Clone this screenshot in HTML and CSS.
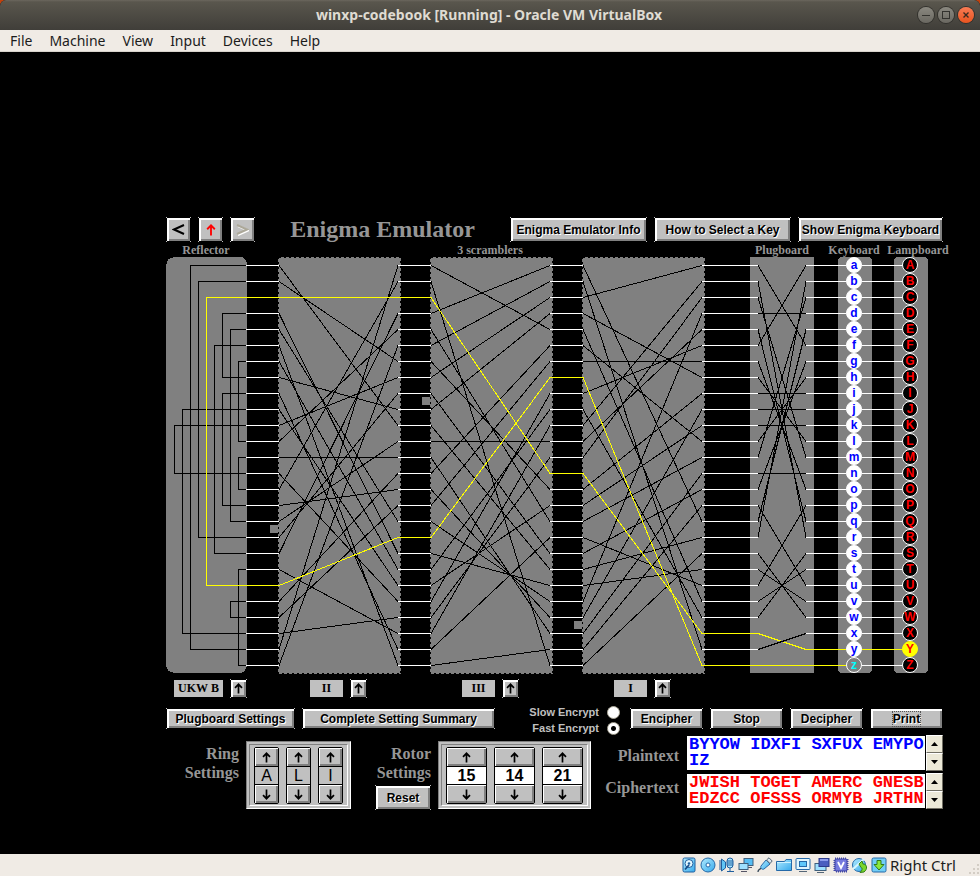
FILE: index.html
```html
<!DOCTYPE html>
<html lang="en">
<head>
<meta charset="utf-8">
<title>winxp-codebook [Running] - Oracle VM VirtualBox</title>
<link rel="stylesheet" href="styles.css">
</head>
<body>
<svg class="defs" width="0" height="0" aria-hidden="true">
  <defs>
    <symbol id="up" viewBox="0 0 9 11"><path d="M4.5 1.2V10.5M1 4.8L4.5 1.3L8 4.8" fill="none" stroke="currentColor" stroke-width="1.7"/></symbol>
    <symbol id="down" viewBox="0 0 9 11"><path d="M4.5 .5V9.8M1 6.2L4.5 9.7L8 6.2" fill="none" stroke="currentColor" stroke-width="1.7"/></symbol>
    <linearGradient id="blue" x1="0" y1="0" x2="1" y2="1"><stop offset="0" stop-color="#b4ecff"/><stop offset="1" stop-color="#35a9ec"/></linearGradient>
  </defs>
</svg>

<header class="titlebar">
  <h1 class="window-title">winxp-codebook [Running] - Oracle VM VirtualBox</h1>
  <div class="window-buttons">
    <button class="wbtn" aria-label="Minimize"><svg width="16" height="16"><path d="M4 8.5h8" stroke="#33322e" stroke-width="1"/></svg></button>
    <button class="wbtn" aria-label="Maximize"><svg width="16" height="16"><rect x="4.5" y="4.5" width="7" height="7" fill="none" stroke="#33322e"/></svg></button>
    <button class="wbtn close" aria-label="Close"><svg width="16" height="16"><path d="M5.500 5.500l5 5m0-5l-5 5" stroke="#3b2a20" stroke-width="1.400"/></svg></button>
  </div>
</header>
<nav class="menubar">
  <a href="#">File</a><a href="#">Machine</a><a href="#">View</a><a href="#">Input</a><a href="#">Devices</a><a href="#">Help</a>
</nav>

<main class="guest">
  <div class="emulator">
    <div class="toolbar">
      <button class="btn square" aria-label="Back"><svg width="13" height="11"><path d="M12 1L2 5.500L12 10" fill="none" stroke="#000" stroke-width="2"/></svg></button>
      <button class="btn square red" aria-label="Up"><svg width="10" height="12"><use href="#up"/></svg></button>
      <button class="btn square" aria-label="Forward" disabled><svg width="13" height="12"><path d="M2 2L12 6.500L2 11" fill="none" stroke="#fff" stroke-width="2"/><path d="M1 1L11 5.500L1 10" fill="none" stroke="#aca899" stroke-width="2"/></svg></button>
      <h2 class="title">Enigma Emulator</h2>
      <button class="btn info">Enigma Emulator Info</button>
      <button class="btn info">How to Select a Key</button>
      <button class="btn show">Show Enigma Keyboard</button>
    </div>

    <div class="captions">
      <span>Reflector</span><span>3 scramblers</span><span>Plugboard</span><span>Keyboard</span><span>Lampboard</span>
    </div>

    <div class="machine">
      <svg class="wiring" id="wiring" width="762" height="417" viewBox="166 257 762 417" role="img" aria-label="Wiring diagram"></svg>
      <div class="keys" id="keys"></div>
      <div class="lamps" id="lamps"></div>
    </div>

    <div class="rotors">
      <div class="rotor"><span class="tag wide">UKW B</span><button class="btn mini" aria-label="Next reflector"><svg width="9" height="11"><use href="#up"/></svg></button></div>
      <div class="rotor"><span class="tag">II</span><button class="btn mini" aria-label="Next left rotor"><svg width="9" height="11"><use href="#up"/></svg></button></div>
      <div class="rotor"><span class="tag">III</span><button class="btn mini" aria-label="Next middle rotor"><svg width="9" height="11"><use href="#up"/></svg></button></div>
      <div class="rotor"><span class="tag">I</span><button class="btn mini" aria-label="Next right rotor"><svg width="9" height="11"><use href="#up"/></svg></button></div>
    </div>

    <div class="actions">
      <button class="btn plug">Plugboard Settings</button>
      <button class="btn summary">Complete Setting Summary</button>
      <div class="speed">
        <label>Slow Encrypt<input type="radio" name="speed"></label>
        <label>Fast Encrypt<input type="radio" name="speed" checked></label>
      </div>
      <button class="btn act">Encipher</button>
      <button class="btn act">Stop</button>
      <button class="btn act">Decipher</button>
      <button class="btn act focused"><span>Print</span></button>
    </div>

    <div class="settings">
      <div class="caption ring">Ring<br>Settings</div>
      <div class="frame"><div class="inner ring-cols" id="ring"></div></div>
      <div class="caption rotorset">Rotor<br>Settings<button class="btn reset">Reset</button></div>
      <div class="frame"><div class="inner rotor-cols" id="rotor"></div></div>
      <div class="texts">
        <div class="labels">
          <label for="plain">Plaintext</label>
          <label for="cipher">Ciphertext</label>
        </div>
        <div class="boxes">
          <div class="textrow">
            <textarea id="plain" class="plain" rows="2" spellcheck="false">BYYOW IDXFI SXFUX EMYPO
IZ</textarea>
            <div class="scroll"><button aria-label="Scroll plaintext up"><svg width="7" height="4"><path d="M0 4L3.500 0L7 4z"/></svg></button><button aria-label="Scroll plaintext down"><svg width="7" height="4"><path d="M0 0L3.500 4L7 0z"/></svg></button></div>
          </div>
          <div class="textrow">
            <textarea id="cipher" class="cipher" rows="2" spellcheck="false">JWISH TOGET AMERC GNESB
EDZCC OFSSS ORMYB JRTHN</textarea>
            <div class="scroll"><button aria-label="Scroll ciphertext up"><svg width="7" height="4"><path d="M0 4L3.500 0L7 4z"/></svg></button><button aria-label="Scroll ciphertext down"><svg width="7" height="4"><path d="M0 0L3.500 4L7 0z"/></svg></button></div>
          </div>
        </div>
      </div>
    </div>
  </div>
</main>

<footer class="statusbar">
  <div class="icons" aria-hidden="true">
    <svg viewBox="0 0 16 16"><rect x="2" y="1" width="12" height="14" rx="1.500" fill="url(#blue)" stroke="#1f5e9e"/><circle cx="8" cy="6.500" r="4" fill="#e4f8ff" stroke="#1f5e9e"/><circle cx="8" cy="6.500" r="1.300" fill="#1f5e9e"/><path d="M4 12.500L8 8" stroke="#174a86" stroke-width="1.800"/></svg>
    <svg viewBox="0 0 16 16"><circle cx="8" cy="8" r="7" fill="url(#blue)" stroke="#2569a8"/><circle cx="8" cy="8" r="2" fill="#fff" stroke="#2569a8"/></svg>
    <svg viewBox="0 0 16 16"><path d="M1 3v10M2.500 2l4 3v6l-4 3z" fill="#61c5f5" stroke="#1f5e9e"/><rect x="8" y="1" width="6" height="10" rx="3" fill="#a4e4ff" stroke="#1f5e9e"/><path d="M8 4h6M8 6h6M8 8h6M11 11v3M8 14.500h7" stroke="#1f5e9e"/></svg>
    <svg viewBox="0 0 16 16"><rect x="6" y="1.500" width="9" height="7" fill="#56bdf4" stroke="#3f5f7c"/><path d="M8 10.500h6" stroke="#556"/><rect x="1" y="6.500" width="9" height="6" fill="#9fe0ff" stroke="#3f5f7c"/><path d="M3 14.500h6" stroke="#556"/></svg>
    <svg viewBox="0 0 16 16"><path d="M1 15C1 12 3 13 4 11" fill="none" stroke="#345" stroke-width="1.300"/><path d="M4 9l5-6 4 4-6 5c-2 1-4-1-3-3z" fill="url(#blue)" stroke="#2569a8"/><path d="M9.500 3L12 .800 15.200 4 13 6.500z" fill="#dde8ee" stroke="#567"/></svg>
    <svg viewBox="0 0 16 16"><path d="M.5 13.500v-9h8l1.500-2h5.500v11z" fill="url(#blue)" stroke="#2569a8"/><path d="M1 5.500h14" stroke="#caf1ff"/></svg>
    <svg viewBox="0 0 16 16"><rect x="1" y="1.500" width="14" height="11" rx="1" fill="#e0f6ff" stroke="#2569a8"/><rect x="4.500" y="4.500" width="7" height="5" fill="#5fc8fa" stroke="#2569a8"/><path d="M4 14.500h8" stroke="#567"/></svg>
    <svg viewBox="0 0 16 16"><rect x="1" y="6.500" width="11" height="7" fill="#9fe0ff" stroke="#3f5f7c"/><rect x="5" y="1.500" width="10" height="8" fill="#4b5fc0" stroke="#2c3b8c"/><path d="M6 3h8" stroke="#8c9cec" stroke-width="2"/><path d="M3 15.500h7" stroke="#567"/></svg>
    <svg viewBox="0 0 16 16"><rect x="2" y="2" width="12" height="12" fill="none" stroke="#4348a8" stroke-width="3" stroke-dasharray="1 1"/><rect x="2" y="2" width="12" height="12" rx="1" fill="#757ade" stroke="#3b409f"/><path d="M5 5l3 6 3-6" fill="none" stroke="#fff" stroke-width="1.800"/></svg>
    <svg viewBox="0 0 16 16"><circle cx="7" cy="8" r="6.500" fill="url(#blue)" stroke="#2569a8"/><path d="M1 12L12 2" stroke="#d7f6ff" stroke-width="2"/><path d="M7 7l3-3 1 3c4 0 5 5 1 8l-4 .5c2-2 3-4 1-5z" fill="#79d62d" stroke="#347e15"/></svg>
    <svg viewBox="0 0 16 16"><rect x="1" y="1" width="14" height="14" rx="1.500" fill="#72cef6" stroke="#2569a8"/><path d="M6 3.500h4v4h3L8 13 3 7.500h3z" fill="#8be83b" stroke="#317a18"/></svg>
  </div>
  <span>Right Ctrl</span>
  <svg class="grip" width="12" height="12" viewBox="0 0 12 12" aria-hidden="true"><path d="M9 1h2M5 5h2M9 5h2M1 9h2M5 9h2M9 9h2" stroke="#d3cdc5" stroke-width="2"/></svg>
</footer>
<script src="enigma.js"></script>
</body>
</html>
```
FILE: styles.css
```css
* { box-sizing: border-box; }

body {
  margin: 0;
  min-height: 100vh;
  display: flex;
  flex-direction: column;
  background: #000;
  font-family: "Liberation Sans", Arial, sans-serif;
}

button { padding: 0; font: inherit; color: inherit; }
h1, h2 { margin: 0; }
.defs { position: absolute; }

/* Window chrome */
.titlebar {
  height: 30px;
  display: flex;
  align-items: center;
  border-radius: 6px 6px 0 0;
  background: linear-gradient(#6b675e 0, #59564d 2px, #403e39 100%);
  box-shadow: 0 -6px 0 6px #c2410c;
  clip-path: inset(0);
}

.window-title {
  flex: 1;
  padding-left: 60px;
  text-align: center;
  font: bold 14px/20px "Noto Sans", sans-serif;
  color: #dfdbd2;
}

.window-buttons { display: flex; gap: 4px; padding-right: 6px; }

.wbtn {
  width: 16px;
  height: 16px;
  border: 0;
  border-radius: 50%;
  background: linear-gradient(#8a8880, #6a6861);
  box-shadow: 0 0 0 1px #32312d;
}

.wbtn.close { background: linear-gradient(#f87b54, #e9541f); }
.wbtn svg { display: block; }

.menubar {
  height: 22px;
  display: flex;
  gap: 17px;
  padding-left: 10px;
  background: #f0ebe5;
  border-bottom: 1px solid #d8d3cc;
  font: 14px/21px "Noto Sans", sans-serif;
}

.menubar a { color: #1c1c1c; text-decoration: none; }

/* Guest screen */
.guest { flex: 1; background: #000; padding: 165px 37px 0 166px; }
.emulator { width: 777px; }

.btn {
  height: 21px;
  border: 1px solid transparent;
  display: flex;
  align-items: center;
  justify-content: center;
  white-space: nowrap;
  color: #000;
  font: bold 12px/14px "Liberation Sans", Arial, sans-serif;
  text-shadow: 1px 1px #fff;
  background:
    linear-gradient(#c0c0c0, #c0c0c0) 0 0 / 1px 1px no-repeat border-box,
    linear-gradient(#c0c0c0, #c0c0c0) 100% 0 / 1px 1px no-repeat border-box,
    linear-gradient(#c0c0c0, #c0c0c0) 0 100% / 1px 1px no-repeat border-box,
    linear-gradient(#c0c0c0, #c0c0c0) 100% 100% / 1px 1px no-repeat border-box,
    linear-gradient(#c0c0c0, #c0c0c0) padding-box;
  box-shadow: inset 2px 2px #fff, inset -2px -2px #808080;
}

.toolbar { display: flex; gap: 7px; }
.toolbar .btn { height: 25px; }
.toolbar .square { width: 25px; color: #000; }
.toolbar .red { color: #f00; }
.info { width: 137px; }
.show { width: 145px; }

.title {
  flex: 1;
  text-align: center;
  font: bold 24px/25px "Liberation Serif", "Times New Roman", serif;
  color: #969696;
}

.captions {
  display: grid;
  grid-template-columns: 80px 488px 96px 48px 80px;
  justify-content: start;
  height: 15px;
  font: bold 12px/17px "Liberation Serif", "Times New Roman", serif;
  color: #969696;
}

.captions span { display: flex; justify-content: center; white-space: nowrap; }

.machine {
  display: grid;
  grid-template-columns: 672px 34px 22px 34px;
}

.wiring { grid-area: 1 / 1 / 2 / -1; }
.wiring * { shape-rendering: crispEdges; }
.panel { fill: #808080; }
.wire { fill: none; stroke: #000; }
.lead { stroke: #fff; }
.wire.live { stroke: #ff0; }
.edge { fill: none; stroke: #000; stroke-dasharray: 2 3; }

.keys, .lamps {
  z-index: 1;
  display: grid;
  grid-auto-rows: 16px;
  justify-items: center;
  padding-right: 2px;
}

.keys { grid-area: 1 / 2; }
.lamps { grid-area: 1 / 4; }

.key, .lamp {
  width: 16px;
  height: 16px;
  border: 1px solid #fff;
  border-radius: 50%;
  text-align: center;
  font: bold 12px/14px "Liberation Sans", Arial, sans-serif;
}

.key { background: #fff; color: #00f; }
.key.pressed { background: #808080; color: #0ff; }
.lamp { background: #000; color: #f00; }
.lamp.lit { background: #ff0; border-color: #ff0; }

.rotors {
  display: grid;
  grid-template-columns: 81px 120px 152px 152px;
  margin-top: 5px;
}

.rotor { display: flex; gap: 7px; align-items: center; justify-content: flex-end; }

.tag {
  width: 33px;
  height: 17px;
  background: #c0c0c0;
  text-align: center;
  font: bold 12px/16px "Liberation Serif", "Times New Roman", serif;
}

.tag.wide { width: 49px; }
.mini { width: 17px; height: 19px; }

.actions { display: flex; gap: 7px; padding-top: 10px; height: 37px; }
.plug { width: 129px; }
.summary { width: 193px; }
.act { width: 73px; }
.speed { width: 121px; margin-top: -4px; padding-right: 3px; }

.speed label {
  display: flex;
  align-items: center;
  justify-content: flex-end;
  gap: 8px;
  height: 16px;
  font: bold 11px/16px "Liberation Sans", Arial, sans-serif;
  color: #c0c0c0;
}

.speed input {
  appearance: none;
  width: 13px;
  height: 13px;
  margin: 0;
  border: 1px solid #aca899;
  border-radius: 50%;
  background: #fff;
}

.speed input:checked { background: radial-gradient(circle, #000 2px, #fff 3px); }
.focused { border-color: #000; }
.focused span { outline: 1px dotted #555; }

.settings { display: flex; align-items: flex-start; }
.settings .frame { margin-top: 6px; }

.caption,
.labels {
  color: #969696;
  text-align: right;
  font: bold 16px/19px "Liberation Serif", "Times New Roman", serif;
}

.caption { padding: 9px 7px 0 0; }
.ring { width: 80px; }
.rotorset { width: 87px; }
.reset { width: 56px; height: 25px; margin: 3px 0 0 auto; }
.rotorset .reset { transform: none; }

.frame {
  padding: 2px;
  background: #c0c0c0;
  border: 1px solid;
  border-color: #808080 #fff #fff #808080;
}

.inner {
  display: flex;
  gap: 7px;
  padding: 2px 4px 1px;
  border: 1px solid;
  border-color: #808080 #fff #fff #808080;
}

.spin { display: flex; flex-direction: column; border: 1px solid #000; border-radius: 2px; }
.ring-cols .spin { width: 25px; }
.rotor-cols .spin { width: 41px; }

.spin button {
  height: 18px;
  border: 0;
  background: #c0c0c0;
  box-shadow: inset 1px 1px #fff, inset -2px -2px #808080;
}

.spin button svg { display: block; margin: 0 auto; }

.spin output {
  height: 19px;
  border: 1px solid #000;
  border-width: 1px 0;
  text-align: center;
  font: 16px/18px "Liberation Sans", Arial, sans-serif;
}

.rotor-cols output { background: #fff; font-weight: bold; }

.texts { flex: 1; display: flex; justify-content: flex-end; gap: 8px; }
.labels { display: grid; grid-auto-rows: 32px; align-content: start; align-items: center; padding-top: 4px; }
.boxes { display: grid; gap: 2px; }
.textrow { display: flex; align-items: center; }

.textrow textarea {
  width: 238px;
  height: 34px;
  margin-right: 1px;
  padding: 1px 0 1px 2px;
  border: 0;
  resize: none;
  overflow: hidden;
  white-space: pre;
  font: bold 17px/16px "Liberation Mono", "Courier New", monospace;
}

.textrow .plain { color: #00f; }
.textrow .cipher { color: #f00; }

.scroll { width: 17px; display: grid; }

.scroll button {
  width: 17px;
  height: 18px;
  display: grid;
  place-items: center;
  border: 1px solid;
  border-color: #fff #716f64 #716f64 #fff;
  background: #ece9d8;
}

/* Host status bar */
.statusbar {
  height: 22px;
  display: flex;
  align-items: center;
  justify-content: flex-end;
  gap: 3px;
  background: #f0ebe5;
  font: 15px/22px "Noto Sans", sans-serif;
  color: #1c1c1c;
}

.icons { display: flex; gap: 3px; }
.icons svg { width: 16px; height: 16px; }
.grip { align-self: flex-end; margin-left: 9px; }
```
FILE: enigma.js
```js
const SIZE = 26;
const SVG = "http://www.w3.org/2000/svg";
const wiring = document.getElementById("wiring");
const rowY = row => 265.5 + row * 16;
const code = ch => ch.charCodeAt(0) - 65;

function draw(tag, attrs) {
  const el = document.createElementNS(SVG, tag);
  for (const name in attrs) el.setAttribute(name, attrs[name]);
  wiring.append(el);
}

function line(x1, row1, x2, row2, cls) {
  draw("path", { class: cls, d: `M${x1} ${rowY(row1)}L${x2} ${rowY(row2)}` });
}

function lead(x1, x2, row, live) {
  line(x1, row, x2, row, "wire lead" + (live ? " live" : ""));
}

// Panels
draw("path", { class: "panel", d: "M176 257H239Q247 257 247 265V664Q247 673 238 673H176Q166 673 166 663V267Q166 257 176 257z" });
const rotors = [
  { x: 278, map: "AJDKSIRUXBLHWTMCQGZNPYFVOE", offset: 14, notch: 525, live: [17, 2] },
  { x: 430, map: "BDFHJLCPRTXVZNYEIWGAKMUSQO", offset: 2, notch: 397, live: [7, 13] },
  { x: 582, map: "EKMFLGDQVZNTOWYHXUSPAIBRCJ", offset: 12, notch: 621, live: [25, 23] }
];
for (const r of rotors) {
  draw("rect", { class: "panel", x: r.x, y: 257, width: 123, height: 417 });
  draw("rect", { class: "edge", x: r.x + 0.5, y: 257.5, width: 122, height: 416 });
  draw("rect", { class: "panel", x: r.x - 8, y: r.notch, width: 8, height: 8 });
}
draw("rect", { class: "panel", x: 750, y: 257, width: 64, height: 416 });
draw("rect", { class: "panel", x: 838, y: 257, width: 34, height: 416, rx: 4 });
draw("rect", { class: "panel", x: 894, y: 257, width: 34, height: 416, rx: 4 });

// Reflector loops: [from, to, x]
const loops = [
  [0, 24, 190], [1, 17, 198], [3, 7, 222], [4, 16, 230], [5, 18, 214], [6, 11, 238],
  [8, 15, 222], [9, 23, 182], [10, 13, 174], [12, 14, 238], [19, 25, 238], [21, 22, 230], [2, 20, 206]
];
for (const [a, b, x] of loops) {
  draw("path", { class: "wire" + (a === 2 ? " live" : ""), d: `M246 ${rowY(a)}H${x + 0.5}V${rowY(b)}H246` });
}

// Wires between the panels
for (let i = 0; i < SIZE; i++) {
  lead(246, 279, i, i === 2 || i === 20);
  lead(398, 431, i, i === 2 || i === 17);
  lead(550, 583, i, i === 7 || i === 13);
  lead(702, 758, i, i === 23 || i === 25);
  lead(806, 846, i, i === 24 || i === 25);
  lead(862, 903, i, i === 24);
}

// Rotor cores, live wires last
for (const r of rotors) {
  const core = right => {
    const left = (code(r.map[(right + r.offset) % SIZE]) - r.offset + SIZE) % SIZE;
    line(r.x + 1, left, r.x + 120, right, "wire" + (r.live.includes(right) ? " live" : ""));
  };
  for (let i = 0; i < SIZE; i++) if (!r.live.includes(i)) core(i);
  r.live.forEach(core);
}

// Plugboard
const plugs = {};
for (const [a, b] of [[0, 5], [1, 17], [2, 12], [4, 16], [6, 14], [7, 11], [15, 20], [18, 22], [19, 21], [23, 24]]) {
  plugs[a] = b;
  plugs[b] = a;
}
for (let i = 0; i < SIZE; i++) {
  line(758, i, 806, i in plugs ? plugs[i] : i, "wire" + (i === 23 || i === 25 ? " live" : ""));
}

// Keys and lamps
for (let i = 0; i < SIZE; i++) {
  const key = document.createElement("button");
  key.className = "key" + (i === 25 ? " pressed" : "");
  key.textContent = String.fromCharCode(97 + i);
  document.getElementById("keys").append(key);
  const lamp = document.createElement("span");
  lamp.className = "lamp" + (i === 24 ? " lit" : "");
  lamp.textContent = String.fromCharCode(65 + i);
  document.getElementById("lamps").append(lamp);
}

// Ring and rotor spinners
function spinners(id, values) {
  document.getElementById(id).innerHTML = values.map(v => `<div class="spin">
    <button aria-label="${id} ${v} up"><svg width="9" height="11"><use href="#up"/></svg></button>
    <output>${v}</output>
    <button aria-label="${id} ${v} down"><svg width="9" height="11"><use href="#down"/></svg></button>
  </div>`).join("");
}
spinners("ring", ["A", "L", "I"]);
spinners("rotor", [15, 14, 21]);
```
